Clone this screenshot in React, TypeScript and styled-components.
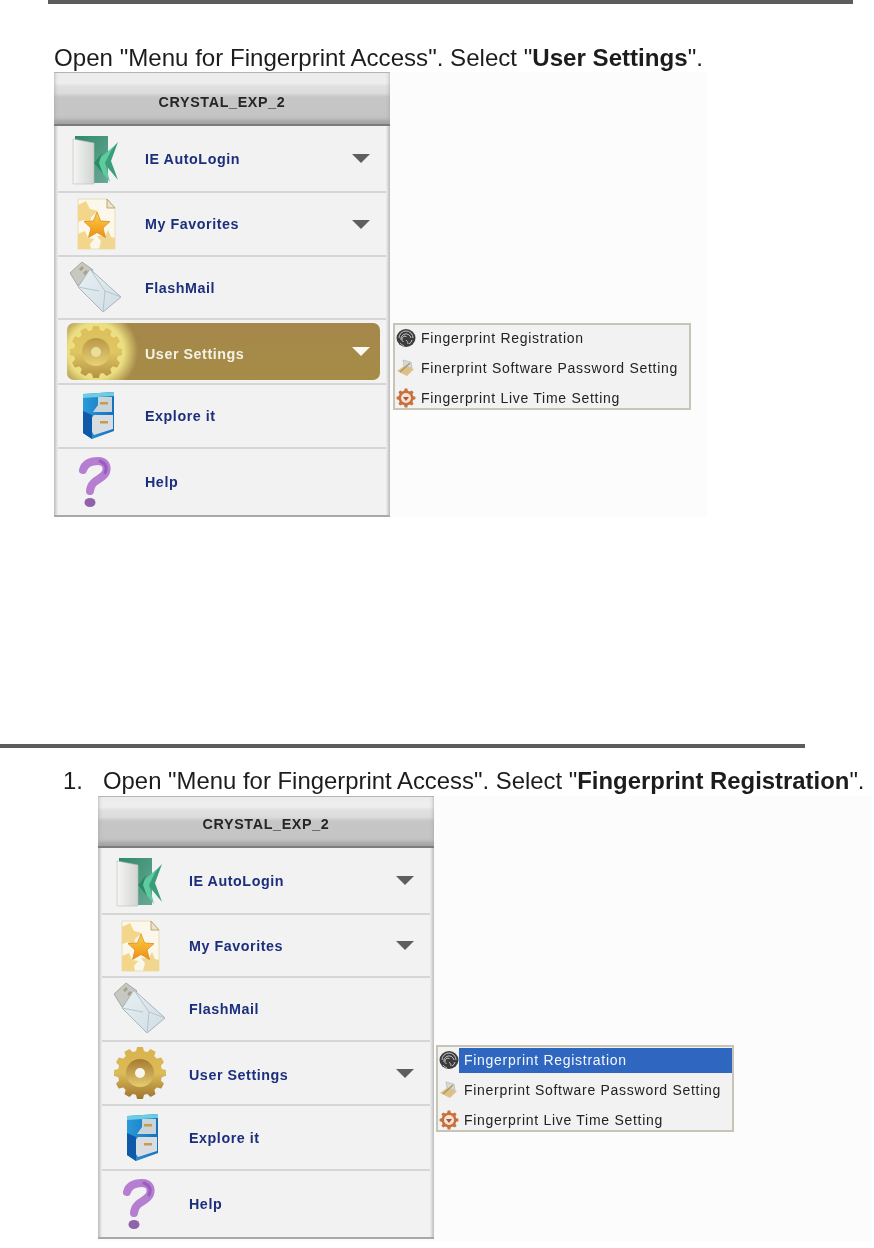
import React from "react";
import styled, { createGlobalStyle } from "styled-components";

const GlobalStyle = createGlobalStyle`
  html, body {
    margin: 0;
    background: #fff;
  }
`;

// gear outline, teeth around a circle
const gearPath = (cx: number, cy: number, outer: number, inner: number, teeth: number) => {
  const pts: string[] = [];
  const step = (Math.PI * 2) / teeth;
  for (let i = 0; i < teeth; i++) {
    const a = i * step;
    [
      [-0.3, inner],
      [-0.17, outer],
      [0.17, outer],
      [0.3, inner],
    ].forEach(([o, r]) => {
      const t = a + o * step;
      pts.push(`${(cx + Math.cos(t) * r).toFixed(1)} ${(cy + Math.sin(t) * r).toFixed(1)}`);
    });
  }
  return `M${pts.join("L")}Z`;
};

const DoorIcon = () => (
  <svg width="52" height="54" viewBox="0 0 52 54">
    <defs>
      <linearGradient id="doorFrame" x1="0" y1="0" x2="1" y2="1">
        <stop offset="0" stopColor="#2f8a68" />
        <stop offset="1" stopColor="#6aa898" />
      </linearGradient>
      <linearGradient id="doorLeaf" x1="0" y1="0" x2="1" y2="0">
        <stop offset="0" stopColor="#f6f6f4" />
        <stop offset="1" stopColor="#d0d4d0" />
      </linearGradient>
    </defs>
    <path d="M5 4H38V51H5Z" fill="url(#doorFrame)" />
    <path d="M3 7L24 11V52H3Z" fill="url(#doorLeaf)" stroke="#b8bcb8" strokeWidth=".6" />
    <path d="M48 10L41 29L48 48L34 31L33 26Z" fill="#3a9e7c" />
    <path d="M43 15L24 31L40 50L35 31Z" fill="#5ecb9e" />
    <path d="M32 21L24 31L33 42L29 31Z" fill="#2b8a66" />
  </svg>
);

const FavoritesIcon = () => (
  <svg width="52" height="54" viewBox="0 0 52 54">
    <defs>
      <linearGradient id="favStar" x1="0" y1="0" x2="0" y2="1">
        <stop offset="0" stopColor="#fbd24a" />
        <stop offset="1" stopColor="#ef8f12" />
      </linearGradient>
    </defs>
    <path d="M8 2H37L45 11V52H8Z" fill="#fbf7ea" stroke="#e8dcb8" />
    <path d="M37 2L45 11H37Z" fill="#e8e4d4" stroke="#b49a50" strokeWidth=".8" />
    <path d="M16 4L20 12L28 14L21 20L20 28L14 23L8 25V8Z" fill="#f3d68a" />
    <path d="M38 33L41 40L45 41V52H29L31 44L27 39L35 39Z" fill="#f0d68e" />
    <path d="M15 34L18 41L24 42L20 47L21 52H8V37Z" fill="#f3d68a" />
    <path d="M27 15L30.600 24L40 24.600L33 31L35.500 40.500L27 35.500L18.500 40.500L21 31L14 24.600L23.400 24Z" fill="url(#favStar)" stroke="#d8851a" strokeWidth=".7" />
  </svg>
);

const FlashMailIcon = () => (
  <svg width="54" height="54" viewBox="0 0 54 54">
    <defs>
      <linearGradient id="flashEnv" x1="0" y1="0" x2="1" y2="1">
        <stop offset="0" stopColor="#e8f0f4" />
        <stop offset="1" stopColor="#cfdde4" />
      </linearGradient>
    </defs>
    <path d="M1 12L13 1L24 9L9 25Z" fill="#c8c8c2" stroke="#9a9a94" strokeWidth=".8" />
    <path d="M10 8l3-3 2 2-3 3ZM14 12l3-3 2 2-3 3Z" fill="#a8a080" />
    <path d="M21 8L52 36L34 51L9 26Z" fill="url(#flashEnv)" stroke="#a8b4ba" />
    <path d="M21 8L36 30L52 36M9 26L30 30M34 51L36 30" fill="none" stroke="#b5c4cc" strokeWidth="1" />
  </svg>
);

const GearIcon = ({ $faded }: { $faded?: boolean }) => (
  <svg width="52" height="52" viewBox="0 0 52 52" opacity={$faded ? 0.72 : 1}>
    <defs>
      <linearGradient id="gearBody" x1="0" y1="0" x2="0" y2="1">
        <stop offset="0" stopColor="#d8b24e" />
        <stop offset="0.5" stopColor="#dcbc58" />
        <stop offset="1" stopColor="#a07630" />
      </linearGradient>
      <linearGradient id="gearHub" x1="0" y1="0" x2="0" y2="1">
        <stop offset="0" stopColor="#a67a30" />
        <stop offset="1" stopColor="#e6cc70" />
      </linearGradient>
    </defs>
    <path d={gearPath(26, 26, 25.5, 21.5, 12)} fill="url(#gearBody)" strokeLinejoin="round" stroke="url(#gearBody)" strokeWidth="1.500" />
    <circle cx="26" cy="26" r="14" fill="url(#gearHub)" />
    <circle cx="26" cy="26" r="5" fill={$faded ? "#e8dca0" : "#f8f6ec"} />
  </svg>
);

const CabinetIcon = () => (
  <svg width="52" height="54" viewBox="0 0 52 54">
    <defs>
      <linearGradient id="cabinetBody" x1="0" y1="0" x2="1" y2="0">
        <stop offset="0" stopColor="#2a9ad8" />
        <stop offset="1" stopColor="#1670c0" />
      </linearGradient>
    </defs>
    <path d="M13 5L44 3V42L22 50L13 44Z" fill="url(#cabinetBody)" />
    <path d="M13 5L44 3V7L13 9Z" fill="#6ccce4" />
    <path d="M28 8H42V23H23L28 16Z" fill="#c9d4d8" />
    <path d="M24 26H43V40L24 46L20 40V31Z" fill="#d7dde0" />
    <rect x="30" y="13" width="8" height="2.500" fill="#c89a50" />
    <rect x="30" y="32" width="8" height="2.500" fill="#c89a50" />
    <path d="M13 44L22 50V26L13 22Z" fill="#0f5aa8" />
  </svg>
);

const HelpIcon = () => (
  <svg width="52" height="54" viewBox="0 0 52 54">
    <path d="M13 15C15 8 22 6 28 6C35 6 38 11 36 17C33 25 21 24 20 36" fill="none" stroke="#b57ed0" strokeWidth="8" strokeLinecap="round" />
    <path d="M30 6C35 8 38 12 35 18" fill="none" stroke="#9a5cc0" strokeWidth="3" strokeLinecap="round" />
    <ellipse cx="20" cy="47.500" rx="5.500" ry="4.500" fill="#8f62ac" />
  </svg>
);

const FingerprintIcon = () => (
  <svg width="20" height="20" viewBox="0 0 20 20">
    <ellipse cx="10" cy="10" rx="9.500" ry="9" fill="#3c3c3c" />
    <path d="M3 10a7 7 0 0 1 14 0M5 12a5 5 0 0 1 10-2M7.500 14a3 3 0 0 1 3-5.500M13 16a6 6 0 0 0 3-4M4 15c1 1 2 2 4 3M10 12c1 1 2 2 2 4" fill="none" stroke="#c4c4c4" strokeWidth="1" />
  </svg>
);

const PasswordIcon = () => (
  <svg width="20" height="20" viewBox="0 0 20 20">
    <path d="M1 13L8 8L18 11L11 18Z" fill="#dcc088" />
    <path d="M7 2L15 4L16 10L8 8Z" fill="#d8d8d4" stroke="#a8a8a8" strokeWidth=".5" />
    <path d="M4 14L14 5" stroke="#a89460" strokeWidth="1.200" />
  </svg>
);

const LiveTimeIcon = () => (
  <svg width="20" height="20" viewBox="0 0 20 20">
    <path d={gearPath(10, 10, 9.5, 7.5, 8)} fill="#c8703c" />
    <circle cx="10" cy="10" r="5" fill="#f4e4d8" />
    <path d="M7 9L10 13L13 9Z" fill="#b8502a" />
  </svg>
);

type Item = { label: string; icon: React.ReactNode; caret?: boolean; low?: boolean; active?: boolean };

const Page = styled.div`
  width: 874px;
  height: 1248px;
  overflow: hidden;
  background: #fff;
  filter: blur(0.4px);
  font-family: "Liberation Sans", Arial, sans-serif;
`;

const Rule = styled.div<{ $left: number; $gap: number }>`
  width: 805px;
  height: 4px;
  margin: ${(p) => p.$gap}px 0 0 ${(p) => p.$left}px;
  background: #5c5c5c;
`;

const Instruction = styled.div<{ $left: number; $gap: number; $size: number }>`
  display: flex;
  margin: ${(p) => p.$gap}px 0 0 ${(p) => p.$left}px;
  font-size: ${(p) => p.$size}px;
  line-height: 24px;
  color: #1c1c1c;
  white-space: nowrap;
`;

const Marker = styled.span`
  width: 40px;
`;

const Figure = styled.div<{ $left: number; $gap: number; $width: number }>`
  position: relative;
  width: ${(p) => p.$width}px;
  height: 445px;
  margin: ${(p) => p.$gap}px 0 0 ${(p) => p.$left}px;
  background: #fcfcfc;
`;

const Panel = styled.div`
  width: 336px;
  display: flex;
  flex-direction: column;
  border-bottom: 2px solid #a8a8a8;
`;

const Header = styled.div<{ $compact?: boolean }>`
  height: ${(p) => (p.$compact ? 52 : 54)}px;
  display: flex;
  align-items: center;
  justify-content: center;
  padding-top: ${(p) => (p.$compact ? 4 : 7)}px;
  box-sizing: border-box;
  border-top: 1px solid #b4b4b4;
  border-bottom: 2px solid #7c7c7c;
  background: linear-gradient(
    to bottom,
    #ececec 0,
    #eeeeee 10px,
    #e0e0e0 13px,
    #dcdcdc 20px,
    #c6c6c6 24px,
    #c4c4c4 100%
  );
  box-shadow: inset 3px -6px 4px -3px #a4a4a4, inset -3px -6px 4px -3px #a4a4a4;
  font-size: 14.3px;
  font-weight: 700;
  letter-spacing: 0.65px;
  color: #262626;
`;

const RowList = styled.div<{ $rows: string }>`
  display: grid;
  grid-template-rows: ${(p) => p.$rows};
  background:
    linear-gradient(to right, #bcbcbc, #f0f0f0) left / 4px 100% no-repeat,
    linear-gradient(to left, #bcbcbc, #f0f0f0) right / 4px 100% no-repeat,
    #f2f2f2;
`;

const Row = styled.div<{ $active?: boolean }>`
  position: relative;
  display: flex;
  align-items: center;
  margin: 0 4px;
  padding-right: 16px;
  border-bottom: 2px solid #d6d6d6;

  &:last-child {
    border-bottom: 0;
  }

  ${(p) =>
    p.$active &&
    `
    &::before {
      content: "";
      position: absolute;
      inset: 3px 6px 3px 9px;
      border-radius: 7px;
      background:
        radial-gradient(circle at 29px 28px, #f0e688 0, #ebde80 28px, rgba(235, 222, 128, 0) 42px),
        linear-gradient(to bottom, #a5874a, #a68c48);
    }
  `}
`;

const IconSlot = styled.div`
  position: relative;
  flex: 0 0 76px;
  display: flex;
  justify-content: center;
  align-items: center;
`;

const Label = styled.span<{ $active?: boolean; $low?: boolean }>`
  position: relative;
  flex: 1;
  margin-left: 11px;
  padding-top: ${(p) => (p.$low ? 4 : 0)}px;
  font-size: 14.3px;
  font-weight: 700;
  letter-spacing: 0.55px;
  color: ${(p) => (p.$active ? "#f4f2e4" : "#1c2f7c")};
`;

const Caret = styled.span<{ $active?: boolean }>`
  position: relative;
  width: 0;
  height: 0;
  border-left: 9px solid transparent;
  border-right: 9px solid transparent;
  border-top: 9px solid ${(p) => (p.$active ? "#fbfaf2" : "#5e5e5e")};
`;

const Submenu = styled.div<{ $left: number; $top: number }>`
  position: absolute;
  left: ${(p) => p.$left}px;
  top: ${(p) => p.$top}px;
  width: 298px;
  height: 87px;
  box-sizing: border-box;
  overflow: hidden;
  border: 2px solid #c8c4b6;
  background: #f2f2f2;
`;

const SubItem = styled.div`
  display: flex;
  align-items: center;
  height: 30px;

  &:first-child {
    margin-top: -2px;
  }
`;

const SubIcon = styled.div`
  flex: 0 0 21px;
  display: flex;
  justify-content: center;
`;

const SubLabel = styled.span<{ $selected?: boolean }>`
  flex: 1;
  line-height: 25px;
  padding-left: 5px;
  font-size: 14px;
  letter-spacing: 0.72px;
  white-space: nowrap;
  color: ${(p) => (p.$selected ? "#f4f7fc" : "#222")};
  background: ${(p) => (p.$selected ? "#2f67c0" : "transparent")};
`;

const Menu = ({ active, rows, compact }: { active?: boolean; rows: string; compact?: boolean }) => {
  const items: Item[] = [
    { label: "IE AutoLogin", icon: <DoorIcon />, caret: true },
    { label: "My Favorites", icon: <FavoritesIcon />, caret: true },
    { label: "FlashMail", icon: <FlashMailIcon /> },
    { label: "User Settings", icon: <GearIcon $faded={active} />, caret: true, low: true, active },
    { label: "Explore it", icon: <CabinetIcon /> },
    { label: "Help", icon: <HelpIcon /> },
  ];

  return (
    <Panel>
      <Header $compact={compact}>CRYSTAL_EXP_2</Header>
      <RowList $rows={rows}>
        {items.map((item) => (
          <Row key={item.label} $active={item.active}>
            <IconSlot>{item.icon}</IconSlot>
            <Label $active={item.active} $low={item.low}>
              {item.label}
            </Label>
            {item.caret && <Caret $active={item.active} />}
          </Row>
        ))}
      </RowList>
    </Panel>
  );
};

const FlyOut = ({ left, top, selected }: { left: number; top: number; selected?: boolean }) => (
  <Submenu $left={left} $top={top}>
    <SubItem>
      <SubIcon>
        <FingerprintIcon />
      </SubIcon>
      <SubLabel $selected={selected}>Fingerprint Registration</SubLabel>
    </SubItem>
    <SubItem>
      <SubIcon>
        <PasswordIcon />
      </SubIcon>
      <SubLabel>Finerprint Software Password Setting</SubLabel>
    </SubItem>
    <SubItem>
      <SubIcon>
        <LiveTimeIcon />
      </SubIcon>
      <SubLabel>Fingerprint Live Time Setting</SubLabel>
    </SubItem>
  </Submenu>
);

const App: React.FC = () => {
  return (
    <Page>
      <GlobalStyle />
      <Rule $left={48} $gap={0} />
      <Instruction $left={54} $gap={42} $size={24.1}>
        <span>
          Open "Menu for Fingerprint Access". Select "<b>User Settings</b>".
        </span>
      </Instruction>
      <Figure $left={54} $gap={2} $width={653}>
        <Menu active rows="67px 64px 63px 65px 64px 66px" />
        <FlyOut left={339} top={251} />
      </Figure>

      <Rule $left={0} $gap={227} />
      <Instruction $left={63} $gap={21} $size={23.9}>
        <Marker>1.</Marker>
        <span>
          Open "Menu for Fingerprint Access". Select "<b>Fingerprint Registration</b>".
        </span>
      </Instruction>
      <Figure $left={98} $gap={3} $width={774}>
        <Menu compact rows="67px 63px 64px 64px 65px 66px" />
        <FlyOut left={338} top={249} selected />
      </Figure>
    </Page>
  );
};

export default App;
